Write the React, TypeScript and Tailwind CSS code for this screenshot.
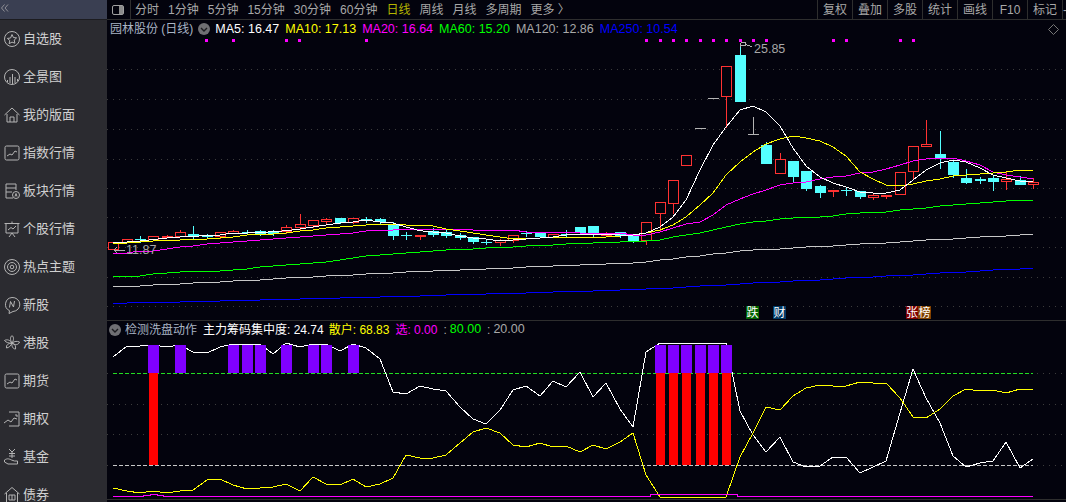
import React from "react";

const X = (i: number) => Math.round(113.2 + 13.33 * i);

type C = [string, number, number, number?, number?];
const candles: C[] = [
  ["r", 242, 249], ["r", 239, 242], ["c", 239, 239, 236, 242], ["r", 236, 239], ["r", 236, 237, 235, 237], ["r", 232, 236, 230, 236],
  ["c", 234, 236, 226, 238], ["c", 236, 236, 234, 238], ["r", 232, 236, 232, 238], ["r", 231, 233, 230, 233], ["c", 232, 232, 230, 234], ["c", 231, 233, 230, 235],
  ["c", 231, 233, 230, 235], ["r", 227, 231, 225, 233], ["r", 224, 227, 214, 229], ["r", 220, 225, 220, 227], ["r", 219, 221, 218, 223], ["c", 218, 222, 218, 223],
  ["r", 218, 222, 218, 223], ["c", 219, 220, 217, 222], ["c", 219, 221, 218, 223], ["c", 225, 235, 222, 239], ["c", 235, 235, 232, 239], ["r", 235, 236, 235, 239],
  ["c", 231, 234, 228, 236], ["c", 232, 235, 230, 237], ["c", 235, 237, 233, 239], ["c", 237, 241, 237, 243], ["c", 242, 242, 240, 244], ["r", 240, 242, 239, 245],
  ["r", 235, 240, 235, 242], ["c", 233, 233, 231, 236], ["c", 233, 236, 233, 237], ["r", 234, 237], ["c", 234, 234, 230, 237], ["c", 227, 232, 227, 234],
  ["c", 226, 233, 226, 236], ["r", 233, 235, 232, 235], ["c", 232, 235, 232, 237], ["c", 236, 240, 236, 242], ["r", 222, 240, 222, 244], ["r", 202, 213, 202, 230],
  ["r", 180, 203, 180, 213], ["r", 155, 165], ["g", 128, 128], ["g", 98, 98], ["r", 66, 96, 66, 127], ["c", 55, 101, 43, 101],
  ["g", 134, 134, 117, 134], ["c", 145, 163, 142, 163], ["r", 159, 173, 153, 173], ["c", 161, 176, 161, 181], ["c", 171, 188, 171, 190], ["c", 186, 192, 185, 197],
  ["r", 190, 191, 190, 196], ["c", 190, 190, 188, 195], ["c", 191, 196, 191, 198], ["r", 195, 197, 194, 199], ["r", 195, 196, 195, 198], ["r", 172, 194],
  ["r", 146, 171, 146, 179], ["r", 144, 146, 120, 146], ["c", 154, 158, 131, 168], ["c", 162, 174, 161, 177], ["c", 178, 182, 169, 183], ["c", 179, 180, 177, 183],
  ["c", 178, 181, 175, 190], ["r", 179, 181, 172, 189], ["c", 180, 184, 176, 184], ["r", 182, 184, 178, 188],
];

const ma5 = [243, 242, 241, 239.5, 238, 237, 236.7, 235, 235, 233, 233, 232.5, 231.7, 230.7, 229, 227, 225, 223, 222, 220, 222, 223, 227, 230.7, 232, 233, 236, 238, 239, 241, 240, 239, 238, 237, 235, 234, 234, 234, 235, 235, 233, 227, 217, 200, 170, 145, 127, 110, 106, 112, 126, 148, 166, 177, 183, 187, 192, 193, 193, 190, 180, 170, 163, 160, 162, 168, 175, 178, 181, 182];
const ma10 = [243, 243, 242, 241, 240, 240, 239, 239, 238, 237, 235, 234, 234, 233, 231, 230, 228, 227, 226, 225, 224, 224, 225, 225, 226, 229, 231, 233, 235, 237, 239, 238, 238, 237, 237, 237, 237, 237, 236, 235, 233, 230, 225, 217, 205, 193, 175, 162, 152, 144, 139, 136, 138, 141, 147, 156, 172, 179, 185, 186, 184, 181, 179, 176, 175, 174, 173, 172, 170, 171];
const ma20 = [254, 253, 251, 251, 249, 247, 246, 244, 243, 242, 241, 240, 239, 238, 237, 236, 235, 234, 233, 231, 230, 230, 229, 229, 229, 229, 229, 230, 230, 230, 230, 232, 232, 232, 232, 233, 233, 233, 233, 235, 235, 232, 228, 224, 222, 215, 205, 199, 194, 190, 185, 183, 182, 179, 177, 176, 173, 172, 169, 165, 161, 159, 158, 158, 161, 165, 172, 175, 177, 179];
const ma60 = [276, 276, 276, 274, 273, 272, 271, 271, 271, 270, 269, 267, 266, 265, 264, 263, 262, 260, 258, 256, 255, 254, 253, 252, 251, 250, 249, 249, 248, 247, 247, 246, 245, 245, 244, 243, 243, 242, 242, 241, 241, 240, 237, 235, 233, 230, 227, 224, 222, 221, 219, 218, 217, 217, 216, 214, 213, 212, 212, 210, 209, 208, 206, 205, 204, 203, 202, 201, 200, 200];
const interp = (a: number[][]) => Array.from({ length: 70 }, (_, i) => {
  for (let k = 0; k < a.length - 1; k++) {
    if (i >= a[k][0] && i <= a[k + 1][0]) {
      return Math.round(a[k][1] + ((a[k + 1][1] - a[k][1]) * (i - a[k][0])) / (a[k + 1][0] - a[k][0]));
    }
  }
  return 0;
});
const ma120 = interp([[0, 287], [22, 272], [40, 262], [47, 251], [69, 234]]);
const ma250 = interp([[0, 303], [10, 300], [22, 296], [40, 289], [69, 268]]);

const w1 = [357, 346, 346, 345, 347, 345, 352, 353, 347, 344, 344, 344, 354, 343, 347, 344, 344, 351, 344, 348, 359, 392, 394, 386, 389, 391, 407, 419, 424, 410, 390, 386, 396, 381, 387, 372, 397, 383, 409, 427, 352, 343, 343, 343, 343, 343, 343, 411, 435, 452, 437, 462, 467, 466, 457, 457, 473, 467, 461, 413, 369, 398, 423, 456, 467, 463, 461, 442, 468, 459];
const y1 = [488, 491, 493, 491, 493, 491, 490, 480, 479, 485, 489, 488, 487, 484, 491, 477, 484, 485, 479, 487, 484, 478, 455, 458, 458, 455, 443, 432, 428, 433, 445, 447, 443, 447, 446, 452, 445, 449, 442, 433, 475, 497, 497, 497, 497, 497, 497, 457, 433, 407, 410, 396, 388, 385, 386, 386, 382, 383, 383, 398, 417, 418, 409, 396, 389, 391, 390, 393, 389, 390];

const pts = (a: number[]) => a.map((v, i) => `${X(i)},${v}`).join(" ");
const dots = [205, 232, 285, 298, 365, 645, 659, 672, 685, 699, 712, 725, 739, 752, 765, 832, 845, 899, 912];
const red = "#ff3232";
const cyan = "#54ffff";

function Candle({ c, i }: { c: C; i: number }) {
  const x = X(i);
  const col = c[0] === "r" ? red : c[0] === "c" ? cyan : "#b4b4b4";
  const [, t, b, hi, lo] = c;
  const wick = <line x1={x + 0.5} x2={x + 0.5} y1={hi ?? t} y2={(lo ?? b) + 1} stroke={col} />;
  if (t === b) {
    return (
      <g>
        {wick}
        <rect x={x - 5} y={t} width={11} height={1} fill={col} />
      </g>
    );
  }
  return (
    <g>
      {wick}
      {c[0] === "r" ? (
        <rect x={x - 4.5} y={t + 0.5} width={10} height={b - t} fill="#03030d" stroke={col} />
      ) : (
        <rect x={x - 5} y={t} width={11} height={b - t + 1} fill={col} />
      )}
    </g>
  );
}

function Chevron() {
  return (
    <svg width="12" height="12" viewBox="0 0 12 12" className="shrink-0">
      <circle cx="6" cy="6" r="6" fill="#6f6f73" />
      <path d="M3 5l3 3 3-3" fill="none" stroke="#1c1c20" strokeWidth="1.4" />
    </svg>
  );
}

const I = ({ children }: { children: React.ReactNode }) => (
  <svg width="18" height="18" viewBox="0 0 18 18" fill="none" stroke="#b4b4b4" strokeWidth="1" className="shrink-0">
    {children}
  </svg>
);

const spark = "M4 12l3-2 2 1 3-4 2 1";
const icons: React.ReactNode[] = [
  <I><circle cx="9" cy="9" r="7.5" /><path d="M9 4.5l1.4 3 3.2.4-2.4 2.1.7 3.2L9 12.1l-2.9 1.6.7-3.2-2.4-2.1 3.2-.4z" /></I>,
  <I><circle cx="9" cy="9" r="7.5" /><path d="M4.5 12v2M7 9v6M9.5 6v10M12 9v6M14.5 11v2" /></I>,
  <I><path d="M1.5 9L9 2l7.5 7M4 8v8h10V8M7 16v-5h4v5" /></I>,
  <I><rect x="2" y="2" width="14" height="14" rx="1.5" /><path d={spark} /></I>,
  <I><path d="M10 16H3V2h10v6M3 6h10M3 10h6" /><circle cx="13" cy="13" r="3.5" /><path d="M12 14.5l1-3 1 3" /></I>,
  <I><path d="M1.5 3.5h15M3 3.5V13h12V3.5M6 17l3-4 3 4M9 1.500v2M5 10l3-2.500 2 1.500 3-3" /></I>,
  <I><circle cx="9" cy="9" r="7.5" /><circle cx="9" cy="9" r="4.5" /><circle cx="9" cy="9" r="1.800" /></I>,
  <I><path d="M9 1.500a7.300 7 0 0 1 1 14l-4 2 .5-2.800A7.300 7 0 0 1 9 1.500z" /><path d="M6.500 11.500l1-6 3 5.500 1-6" /></I>,
  <I><path d="M9 9C7 6 7 3 9 1.500 11 3 11 6 9 9zM9 9c3-2 5-2 7.500-1-1 3-4 3.500-7.500 1zM9 9c3 1 4 3 3.500 6C10 15 8.500 12.500 9 9zM9 9c-1 3-3 4.500-5.500 5C3 11 5 9.500 9 9zM9 9C6 9.500 3 8.500 1.500 6.500 4 5 7 6 9 9z" /></I>,
  <I><rect x="2" y="2" width="14" height="14" rx="1.5" /><path d={spark} /></I>,
  <I><path d="M6 2h10v14H6M1 13l4-3 3 2 3-4 3 1M12 5l2 0 0 2" /></I>,
  <I><path d="M6 1l3 3 3-3M9 4v6M6 5.500h6M6 8h6M1.500 12c3-2 5-1 7 0l3 1c1 0 2 0 3 0v3H5L1.500 14z" /></I>,
  <I><path d="M1.500 8L9 1.500 16.500 8M3.500 7v10h11V7M6 9h6v5H6zM9 9v5" /></I>,
];
const nav = ["自选股", "全景图", "我的版面", "指数行情", "板块行情", "个股行情", "热点主题", "新股", "港股", "期货", "期权", "基金", "债券"];

const tabs = ["1分钟", "5分钟", "15分钟", "30分钟", "60分钟"];
const tabs2 = ["周线", "月线", "多周期", "更多 〉"];
const tools = ["复权", "叠加", "多股", "统计", "画线", "F10", "标记"];

const grid = [69, 99, 129, 159, 188, 217, 247, 277, 306];

export default function App() {
  return (
    <div className="flex h-[502px] w-[1066px] overflow-hidden bg-[#03030d] font-['Liberation_Sans','Noto_Sans_CJK_SC',sans-serif] text-[12px] text-[#a8a8a8]">
      <aside className="flex w-[107px] shrink-0 flex-col bg-[#2b2b30]">
        <div className="flex h-[20px] shrink-0 items-start border-b border-[#1c1c20] bg-[#3a3f52] pt-[4px] pl-[1px]">
          <svg width="8" height="8" viewBox="0 0 8 8" fill="none" stroke="#8f8f96" strokeWidth="1">
            <path d="M3.500 .5L.5 4l3 3.500M7 .5L4 4l3 3.500" />
          </svg>
        </div>
        {nav.map((n, i) => (
          <div key={n} className="flex h-[38px] shrink-0 items-center gap-[2px] pl-[3px] text-[13px] text-[#d0d0d0]">
            {icons[i]}
            <span>{n}</span>
          </div>
        ))}
      </aside>

      <main className="flex min-w-0 flex-1 flex-col">
        <div className="flex h-[20px] shrink-0 items-center border-b border-[#2e2e2e]">
          <div className="flex h-full w-[24px] items-center justify-center border-r border-[#2e2e2e] pr-[2px]">
            <div className="flex h-[10px] w-[12px] justify-end rounded-[2px] border border-[#a0a0a0]">
              <div className="w-[4px] bg-[#8a8a8a]" />
            </div>
          </div>
          <div className="flex flex-1 items-center gap-[9px] pl-[4px]">
            <span>分时</span>
            {tabs.map((t) => <span key={t}>{t}</span>)}
            <span className="text-[#b4b400]">日线</span>
            {tabs2.map((t) => <span key={t}>{t}</span>)}
          </div>
          <div className="flex h-full">
            {tools.map((t) => (
              <div key={t} className="flex h-full w-[35px] items-center justify-center border-l border-[#2e2e2e]">{t}</div>
            ))}
            <div className="flex h-full w-[4px] items-center border-l border-[#2e2e2e] text-[#a8a8a8]">-</div>
          </div>
        </div>

        <section className="flex h-[301px] shrink-0 flex-col border-b border-[#2e2e2e]">
          <div className="flex h-[18px] shrink-0 items-center pl-[3px] whitespace-nowrap">
            <span className="mr-[5px] text-[#a9b4c4]">园林股份 (日线)</span>
            <Chevron />
            <span className="ml-[5px] text-[12.5px] text-white">MA5: 16.47</span>
            <span className="ml-[6px] text-[12.5px] text-[#ffff00]">MA10: 17.13</span>
            <span className="ml-[6px] text-[12.5px] text-[#ff00ff]">MA20: 16.64</span>
            <span className="ml-[6px] text-[12.5px] text-[#00ff00]">MA60: 15.20</span>
            <span className="ml-[6px] text-[12.5px] text-[#a8a8a8]">MA120: 12.86</span>
            <span className="ml-[6px] text-[12.5px] text-[#0000ff]">MA250: 10.54</span>
            <svg width="11" height="11" viewBox="0 0 11 11" className="mr-[7px] ml-auto shrink-0">
              <path d="M5.500 .5l5 5-5 5-5-5z" fill="none" stroke="#777" />
            </svg>
          </div>
          <svg viewBox="107 38 959 282" className="h-[282px] w-[959px] shrink-0" shapeRendering="crispEdges">
            {grid.map((y) => <line key={y} x1="107" x2="1066" y1={y + 0.5} y2={y + 0.5} stroke="#3c3c3c" strokeDasharray="1 5" />)}
            {dots.map((x) => <rect key={x} x={x} y="39" width="3" height="3" fill="#ff00ff" />)}
            {candles.map((c, i) => <Candle key={i} c={c} i={i} />)}
            <polyline points={pts(ma250)} fill="none" stroke="#0000ff" />
            <polyline points={pts(ma120)} fill="none" stroke="#c8c8c8" />
            <polyline points={pts(ma60)} fill="none" stroke="#00ff00" />
            <polyline points={pts(ma20)} fill="none" stroke="#ff00ff" />
            <polyline points={pts(ma10)} fill="none" stroke="#ffff00" />
            <polyline points={pts(ma5)} fill="none" stroke="#ffffff" />
            <path d="M740.500 43v4M741 42h4v3h-4M745 44l7 3" fill="none" stroke="#b0b0b0" />
            <text x="754" y="53" fontSize="12.500" fill="#a8a8a8">25.85</text>
            <path d="M117 247l-3 3 3 3M114 250h11" fill="none" stroke="#b0b0b0" />
            <text x="126" y="254" fontSize="12.500" fill="#a8a8a8">11.87</text>
            <rect x="746" y="306" width="13" height="13" fill="#006400" />
            <text x="746.500" y="317" fontSize="12" fill="#fff">跌</text>
            <rect x="773" y="306" width="13" height="13" fill="#003a66" />
            <text x="773.500" y="317" fontSize="12" fill="#fff">财</text>
            <rect x="906" y="306" width="12" height="13" fill="#800000" />
            <text x="906" y="317" fontSize="12" fill="#fff">张</text>
            <rect x="918" y="306" width="13" height="13" fill="#804000" />
            <text x="918.500" y="317" fontSize="12" fill="#fff">榜</text>
          </svg>
        </section>

        <section className="flex min-h-0 flex-1 flex-col">
          <div className="flex h-[17px] shrink-0 items-center pl-[2px] whitespace-nowrap">
            <Chevron />
            <span className="ml-[4px] text-[#a9b4c4]">检测洗盘动作</span>
            <span className="ml-[6px] text-white">主力筹码集中度: 24.74</span>
            <span className="ml-[5px] text-[#ffff00]">散户: 68.83</span>
            <span className="ml-[6px] text-[#ff00ff]">选: 0.00</span>
            <span className="ml-[6px]">:</span>
            <span className="ml-[3px] text-[12.5px] text-[#00ff00]">80.00</span>
            <span className="ml-[6px]">:</span>
            <span className="ml-[3px] text-[12.5px] text-[#a8a8a8]">20.00</span>
          </div>
          <svg viewBox="107 338 959 164" className="h-[164px] w-[959px] shrink-0" shapeRendering="crispEdges">
            {[373, 404, 434, 465].map((y) => <line key={y} x1="107" x2="1066" y1={y + 0.5} y2={y + 0.5} stroke="#3c3c3c" strokeDasharray="1 5" />)}
            <line x1="113" x2="1033" y1="373.500" y2="373.500" stroke="#22dd22" strokeDasharray="4 2" />
            <line x1="113" x2="1033" y1="465.500" y2="465.500" stroke="#c8c8c8" strokeDasharray="4 2" />
            <polyline points={pts(w1)} fill="none" stroke="#ffffff" />
            <polyline points={pts(y1)} fill="none" stroke="#ffff00" />
            {[3, 5, 9, 10, 11, 13, 15, 16, 18, 41, 42, 43, 44, 45, 46].map((i) => <rect key={i} x={X(i) - 5} y="345" width="11" height="28" fill="#8000ff" />)}
            {[3, 41, 42, 43, 44, 45, 46].map((i) => <rect key={i} x={X(i) - 4} y="373" width="9" height="92" fill="#ff0000" />)}
            <path d="M113 496.500H143V495.500H150V494.500H157V495.500H163V496.500H650V494.500H737V496.500H1033" fill="none" stroke="#ff00ff" />
            <line x1="107" x2="1066" y1="499.500" y2="499.500" stroke="#2e2e2e" />
          </svg>
        </section>
      </main>
    </div>
  );
}
